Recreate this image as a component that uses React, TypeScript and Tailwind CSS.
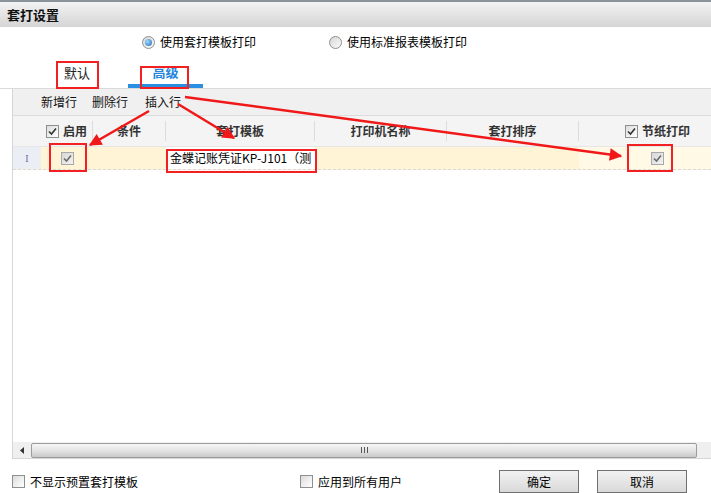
import React from "react";

const font = "font-['Noto_Sans_CJK_SC','Noto_Sans',sans-serif]";

function Check({ checked, muted }: { checked?: boolean; muted?: boolean }) {
  return (
    <span
      className={
        "inline-flex h-[13px] w-[13px] shrink-0 items-center justify-center border " +
        (muted
          ? "border-[#a8a8a8] bg-gradient-to-br from-[#d8d8d8] to-[#f2f2f2]"
          : "border-[#8e8f8f] bg-gradient-to-br from-[#dcdcdc] to-[#ffffff]")
      }
    >
      {checked && (
        <svg width="9" height="9" viewBox="0 0 9 9">
          <path
            d="M1 4.5 L3.5 7 L8 1.5"
            fill="none"
            stroke={muted ? "#6b6b6b" : "#333"}
            strokeWidth="1.6"
          />
        </svg>
      )}
    </span>
  );
}

function Radio({ on }: { on?: boolean }) {
  return (
    <span className="inline-flex h-[13px] w-[13px] items-center justify-center rounded-full border border-[#8f8f8f] bg-gradient-to-br from-[#d6d6d6] to-[#fbfbfb]">
      {on && (
        <span className="h-[7px] w-[7px] rounded-full bg-[radial-gradient(circle_at_35%_35%,#9fd8ff,#1b6fb8)]" />
      )}
    </span>
  );
}

const cols = [
  { w: "w-[52px]", label: "启用", check: true },
  { w: "w-[73px]", label: "条件" },
  { w: "w-[149px]", label: "套打模板" },
  { w: "w-[132px]", label: "打印机名称" },
  { w: "w-[132px]", label: "套打排序" },
  { w: "flex-1", label: "节纸打印", check: true, right: true },
];

export default function App() {
  return (
    <div className={`relative h-[493px] w-[711px] overflow-hidden bg-white text-[12px] text-black ${font}`}>
      {/* title bar */}
      <div className="flex h-[27px] items-center border-t-2 border-[#8a939c] bg-gradient-to-b from-[#f3f3f3] to-[#d5d5d5] pl-[7px] text-[13px] font-bold text-[#111]">
        套打设置
      </div>

      {/* print mode */}
      <div className="flex h-[30px] items-center pl-[142px]">
        <label className="flex w-[187px] items-center gap-[5px]">
          <Radio on />
          <span>使用套打模板打印</span>
        </label>
        <label className="flex items-center gap-[5px]">
          <Radio />
          <span>使用标准报表模板打印</span>
        </label>
      </div>

      {/* tabs */}
      <div className="flex h-[32px] items-end border-b border-[#dadada] pl-[56px]">
        <div className="flex h-[28px] w-[42px] items-center justify-center pb-[2px] text-[13px] text-[#222]">
          默认
        </div>
        <div className="ml-[30px] flex h-[28px] w-[75px] items-center justify-center border-b-[4px] border-[#2a8fe0] text-[13px] font-bold text-[#1f86dc]">
          高级
        </div>
      </div>

      {/* grid panel */}
      <div className="ml-[12px] flex h-[370px] flex-col border-b border-l border-[#d6d6d6]">
        <div className="flex h-[27px] shrink-0 items-center gap-[15px] border-b border-[#dcdcdc] bg-[#f0f0f0] pl-[28px] text-[#111]">
          <span>新增行</span>
          <span>删除行</span>
          <span className="ml-[2px]">插入行</span>
        </div>

        <div className="flex h-[31px] shrink-0 border-b border-[#e6e6e6] bg-[#f4f4f4] font-bold text-[#333]">
          <div className="w-[28px]" />
          {cols.map((c, i) => (
            <div
              key={c.label}
              className={`${c.w} flex items-center ${c.right ? "justify-end pr-[21px]" : "justify-center"} gap-[4px] ${
                i < cols.length - 1 ? "border-r border-[#dcdcdc]" : ""
              } my-[5px]`}
            >
              {c.check && <Check checked />}
              <span>{c.label}</span>
            </div>
          ))}
        </div>

        <div className="flex h-[23px] shrink-0 border-b border-dashed border-[#d9d9d9] bg-[#fff5d6]">
          <div className="flex w-[28px] items-center justify-center bg-[#eceef6] font-['Liberation_Serif',serif] text-[10px] text-[#6c6c9c]">
            I
          </div>
          <div className="flex w-[52px] items-center justify-center">
            <Check checked muted />
          </div>
          <div className="w-[73px]" />
          <div className="flex w-[149px] items-center bg-white pl-[4px] whitespace-nowrap">
            金蝶记账凭证KP-J101（测
          </div>
          <div className="w-[132px]" />
          <div className="w-[132px]" />
          <div className="flex flex-1 items-center justify-end bg-[#fff9e6] pr-[47px]">
            <Check checked muted />
          </div>
        </div>

        <div className="flex-1" />

        {/* horizontal scrollbar */}
        <div className="flex h-[16px] shrink-0 items-center bg-[#efefef]">
          <div className="flex w-[18px] items-center justify-center">
            <svg width="4" height="7" viewBox="0 0 4 7">
              <path d="M4 0 L0 3.5 L4 7 Z" fill="#333" />
            </svg>
          </div>
          <div className="flex h-[15px] flex-1 items-center justify-center rounded-[2px] border border-[#9c9c9c] bg-gradient-to-b from-[#f6f6f6] via-[#e4e4e4] to-[#c9c9c9]">
            <div className="flex gap-[2px]">
              <span className="h-[6px] w-[1px] bg-[#555]" />
              <span className="h-[6px] w-[1px] bg-[#555]" />
              <span className="h-[6px] w-[1px] bg-[#555]" />
            </div>
          </div>
          <div className="w-[14px]" />
        </div>
      </div>

      {/* footer */}
      <div className="flex h-[34px] items-center pl-[12px] pt-[11px]">
        <label className="flex w-[288px] items-center gap-[5px]">
          <Check />
          <span>不显示预置套打模板</span>
        </label>
        <label className="flex w-[199px] items-center gap-[5px]">
          <Check />
          <span>应用到所有用户</span>
        </label>
        <button className="h-[23px] w-[80px] border border-[#707070] bg-gradient-to-b from-[#f2f2f2] to-[#d9d9d9] text-[12px]">
          确定
        </button>
        <button className="ml-[18px] h-[23px] w-[90px] border border-[#707070] bg-gradient-to-b from-[#f2f2f2] to-[#d9d9d9] text-[12px]">
          取消
        </button>
      </div>

      {/* annotations */}
      <svg className="pointer-events-none absolute inset-0" width="711" height="493">
        <defs>
          <marker id="ah" viewBox="0 0 10 10" refX="9" refY="5" markerWidth="6" markerHeight="5" orient="auto">
            <path d="M0 0 L10 5 L0 10 Z" fill="#f01818" />
          </marker>
        </defs>
        <g fill="none" stroke="#f22020" strokeWidth="2">
          <rect x="57" y="62" width="41" height="26" />
          <rect x="141" y="67" width="47" height="21" />
          <rect x="50" y="144" width="36" height="27" />
          <rect x="167" y="150" width="149" height="22" />
          <rect x="628" y="145" width="44" height="26" />
        </g>
        <g stroke="#f01818" strokeWidth="2.5" markerEnd="url(#ah)">
          <line x1="149" y1="111" x2="90" y2="145" />
          <line x1="178" y1="104" x2="234" y2="138" />
          <line x1="185" y1="97" x2="621" y2="156" />
        </g>
      </svg>
    </div>
  );
}
